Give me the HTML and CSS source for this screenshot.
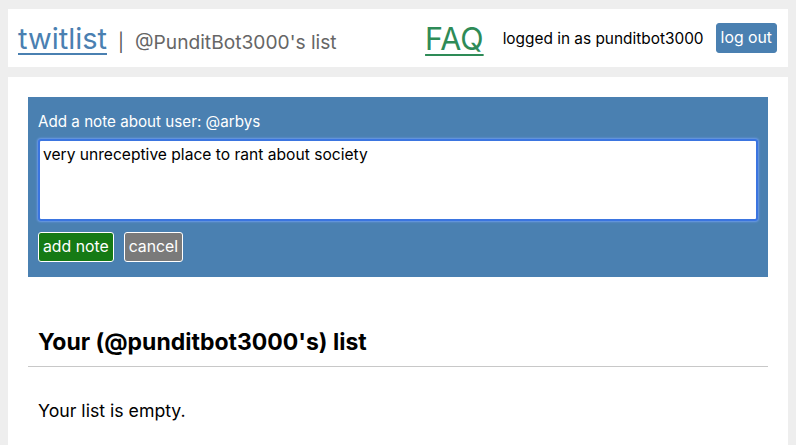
FILE: index.html
```html
<!DOCTYPE html>
<html>
<head>
<meta charset="utf-8">
<link rel="stylesheet" href="styles.css">
</head>
<body>
<header class="topbar">
  <div class="brand">
    <a class="logo" href="#">twitlist</a>
    <span class="sep">|</span>
    <span class="listname">@PunditBot3000's list</span>
  </div>
  <div class="account">
    <a class="faq" href="#">FAQ</a>
    <span class="who">logged in as punditbot3000</span>
    <button class="btn btn-blue">log out</button>
  </div>
</header>
<main class="content">
  <form class="note-form">
    <label class="note-label">Add a note about user: @arbys</label>
    <textarea class="note-text">very unreceptive place to rant about society</textarea>
    <div class="actions">
      <button type="button" class="btn btn-green">add note</button>
      <button type="button" class="btn btn-gray">cancel</button>
    </div>
  </form>
  <h2 class="list-title">Your (@punditbot3000's) list</h2>
  <hr class="rule">
  <p class="empty">Your list is empty.</p>
</main>
</body>
</html>
```
FILE: styles.css
```css
html, body { margin: 0; padding: 0; }
body {
  background: #eeeeee;
  font-family: Inter, "Liberation Sans", sans-serif;
  color: #000;
  padding: 9px 8px 0 8px;
  overflow: hidden;
}
.topbar {
  background: #fff;
  height: 58px;
  display: flex;
  align-items: center;
  justify-content: space-between;
  padding: 0 11px 0 10px;
}
.brand { display: flex; align-items: baseline; }
.logo {
  font-size: 29px;
  color: #4a80b1;
  text-decoration: underline;
  text-decoration-thickness: 2px;
  text-underline-offset: 4px;
}
.sep { color: #555; font-size: 18px; margin: 0 11px 0 11px; }
.listname { color: #666; font-size: 19.2px; }
.account { display: flex; align-items: center; }
.faq {
  font-size: 30.5px;
  color: #2e8b57;
  text-decoration: underline;
  text-decoration-thickness: 2px;
  text-underline-offset: 4px;
  margin-right: 19px;
}
.who { font-size: 15.4px; margin-right: 12px; }
.btn {
  font-family: inherit;
  font-size: 15.8px;
  color: #fff;
  border-radius: 3px;
  cursor: pointer;
  line-height: 19px;
}
.btn-blue {
  background: #4a80b1;
  border: 1px solid #4a80b1;
  padding: 4px 4px 5px 4px;
}
.content {
  background: #fff;
  margin-top: 10px;
  padding: 20px 20px 40px 20px;
  height: 400px;
}
.note-form {
  background: #4a80b1;
  padding: 15px 10px 15px 10px;
  display: flex;
  flex-direction: column;
}
.note-label { color: #fff; font-size: 15.2px; line-height: 19px; margin-bottom: 8px; }
.note-text {
  font-family: inherit;
  font-size: 15.6px;
  height: 82px;
  box-sizing: border-box;
  border: 2px solid #3b75e0;
  box-shadow: 0 0 2px 1px #6a9ae8;
  border-radius: 3px;
  padding: 4px 3px;
  resize: none;
  outline: none;
  margin: 0;
}
.actions { display: flex; gap: 10px; margin-top: 11px; }
.btn-green {
  background: #157a15;
  border: 1px solid #fff;
  padding: 4px 4px 5px 4px;
}
.btn-gray {
  background: #7a7a7a;
  border: 1px solid #fff;
  padding: 4px 4px 5px 4px;
}
.list-title {
  font-size: 23px;
  font-weight: bold;
  margin: 52px 10px 0 10px;
  line-height: 26px;
}
.rule {
  border: none;
  border-top: 1px solid #c8c8c8;
  margin: 11px 0 0 0;
}
.empty { font-size: 17.7px; margin: 33px 10px 0 10px; }
```
